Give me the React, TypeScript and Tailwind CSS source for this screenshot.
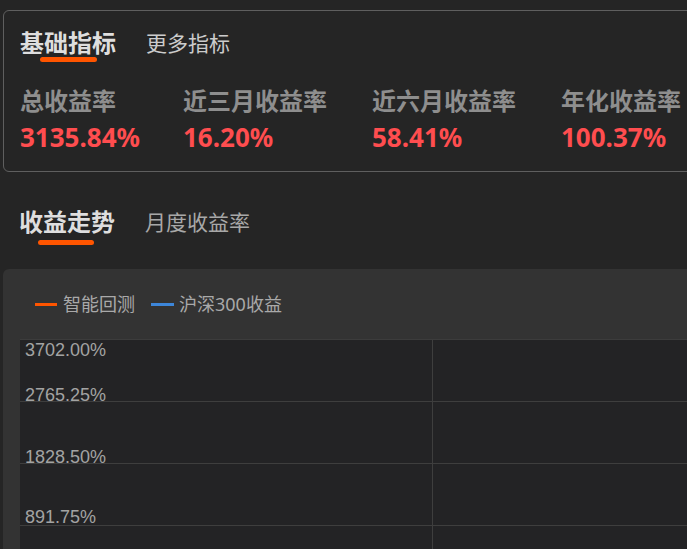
import React from 'react';

const metrics = [
  { label: '总收益率', value: '3135.84%', w: 'w-[163px]' },
  { label: '近三月收益率', value: '16.20%', w: 'w-[189px]' },
  { label: '近六月收益率', value: '58.41%', w: 'w-[189px]' },
  { label: '年化收益率', value: '100.37%', w: 'w-[189px]' },
];

const yLabels = [
  { text: '3702.00%', top: 'top-[1px]' },
  { text: '2765.25%', top: 'top-[46px]' },
  { text: '1828.50%', top: 'top-[108px]' },
  { text: '891.75%', top: 'top-[168px]' },
];

const cjk = "font-['Noto_Sans','Noto_Sans_CJK_SC',sans-serif]";

export default function App() {
  return (
    <div className={`w-[687px] h-[549px] overflow-hidden bg-[#252525] pt-[10px] pl-[3px] ${cjk}`}>
      {/* 指标卡片 */}
      <div className="w-[760px] rounded-[6px] border border-[#5f5f5f] pt-[16px] pb-[17px] pl-[16px]">
        <div className="flex items-center">
          <div className="relative">
            <span className="block text-[24px] leading-[32px] font-bold text-[#dedede]">基础指标</span>
            <div className="absolute left-[20px] top-[30px] h-[5px] w-[57px] rounded-full bg-[#ff5500]" />
          </div>
          <span className="ml-[30px] text-[21px] leading-[32px] text-[#cccccc]">更多指标</span>
        </div>

        <div className="mt-[26px] flex">
          {metrics.map((m) => (
            <div key={m.label} className={`${m.w} shrink-0`}>
              <div className="text-[24px] leading-[32px] font-bold text-[#8e8e8e] whitespace-nowrap">{m.label}</div>
              <div className="mt-[3px] text-[26px] leading-[34px] font-bold text-[#ff4d4f]">{m.value}</div>
            </div>
          ))}
        </div>
      </div>

      {/* 收益走势 */}
      <div className="mt-[34px] pl-[16px] flex items-center">
        <div className="relative">
          <span className="block text-[24px] leading-[32px] font-bold text-[#dedede]">收益走势</span>
          <div className="absolute left-[19px] top-[34px] h-[5px] w-[56px] rounded-full bg-[#ff5500]" />
        </div>
        <span className="ml-[30px] text-[21px] leading-[32px] text-[#a8a8a8]">月度收益率</span>
      </div>

      <div className="mt-[31px] w-[760px] h-[320px] rounded-tl-[6px] bg-[#333333] pt-[23px] pl-[17px]">
        <div className="flex items-center pl-[15px] h-[24px]">
          <div className="h-[3px] w-[22px] bg-[#ff5500]" />
          <span className="ml-[6px] text-[18px] leading-[24px] text-[#a9a9a9]">智能回测</span>
          <div className="ml-[16px] h-[3px] w-[23px] bg-[#3d86d9]" />
          <span className="ml-[5px] text-[18px] leading-[24px] text-[#a9a9a9]">沪深300收益</span>
        </div>

        <div className="relative mt-[23px] h-[260px] bg-[#232325] border-t border-[#3c3c3c]">
          <div className="absolute left-[412px] top-0 bottom-0 w-px bg-[#3e3e3e]" />
          <div className="absolute left-0 right-0 top-[61px] h-px bg-[#3e3e3e]" />
          <div className="absolute left-0 right-0 top-[123px] h-px bg-[#3e3e3e]" />
          <div className="absolute left-0 right-0 top-[185px] h-px bg-[#3e3e3e]" />
          {yLabels.map((l) => (
            <span
              key={l.text}
              className={`absolute left-[5px] ${l.top} font-['Liberation_Sans',Arial,sans-serif] text-[18px] leading-[18px] text-[#a3a3a3]`}
            >
              {l.text}
            </span>
          ))}
        </div>
      </div>
    </div>
  );
}
